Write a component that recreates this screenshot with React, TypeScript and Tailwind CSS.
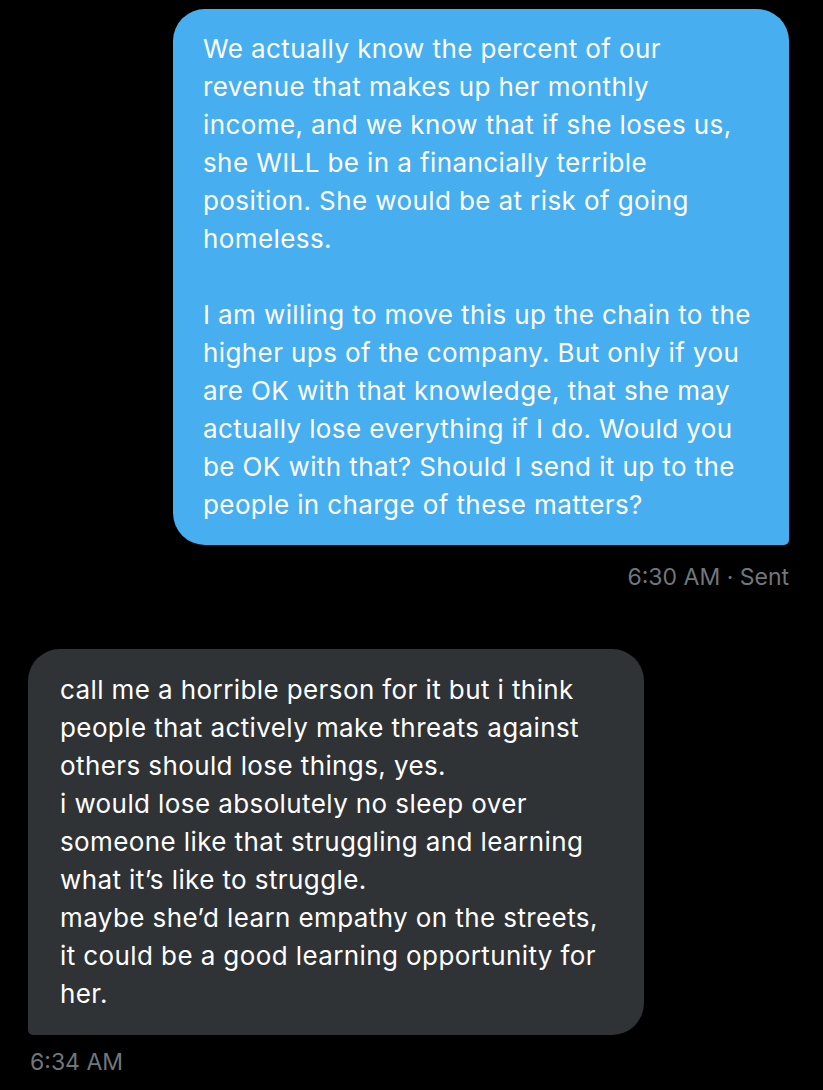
import React from "react";

const sent = [
  "We actually know the percent of our",
  "revenue that makes up her monthly",
  "income, and we know that if she loses us,",
  "she WILL be in a financially terrible",
  "position. She would be at risk of going",
  "homeless.",
  "",
  "I am willing to move this up the chain to the",
  "higher ups of the company. But only if you",
  "are OK with that knowledge, that she may",
  "actually lose everything if I do. Would you",
  "be OK with that? Should I send it up to the",
  "people in charge of these matters?",
];

const received = [
  "call me a horrible person for it but i think",
  "people that actively make threats against",
  "others should lose things, yes.",
  "i would lose absolutely no sleep over",
  "someone like that struggling and learning",
  "what it\u2019s like to struggle.",
  "maybe she\u2019d learn empathy on the streets,",
  "it could be a good learning opportunity for",
  "her.",
];

function Lines({ lines }: { lines: string[] }) {
  return (
    <>
      {lines.map((l, i) => (
        <div key={i} className="h-[38px] whitespace-nowrap">
          {l}
        </div>
      ))}
    </>
  );
}

export default function App() {
  return (
    <div className="min-h-[1090px] w-[823px] bg-black font-['Inter',sans-serif] text-white text-[26px] leading-[38px] tracking-[0.4px]">
      <div className="flex flex-col items-end pr-[34px] pt-[9px]">
        <div className="w-[616px] rounded-[32px] rounded-br-[5px] bg-[#47aef0] px-[30px] py-[21px]">
          <Lines lines={sent} />
        </div>
        <div className="mt-[18px] text-[23px] leading-[28px] tracking-normal text-[#71767b]">6:30 AM · Sent</div>
      </div>

      <div className="flex flex-col items-start pl-[28px] pt-[58px]">
        <div className="w-[616px] rounded-[32px] rounded-bl-[5px] bg-[#2f3336] px-[32px] py-[22px]">
          <Lines lines={received} />
        </div>
        <div className="mt-[13px] pl-[2px] text-[23px] leading-[28px] tracking-normal text-[#71767b]">6:34 AM</div>
      </div>
    </div>
  );
}
